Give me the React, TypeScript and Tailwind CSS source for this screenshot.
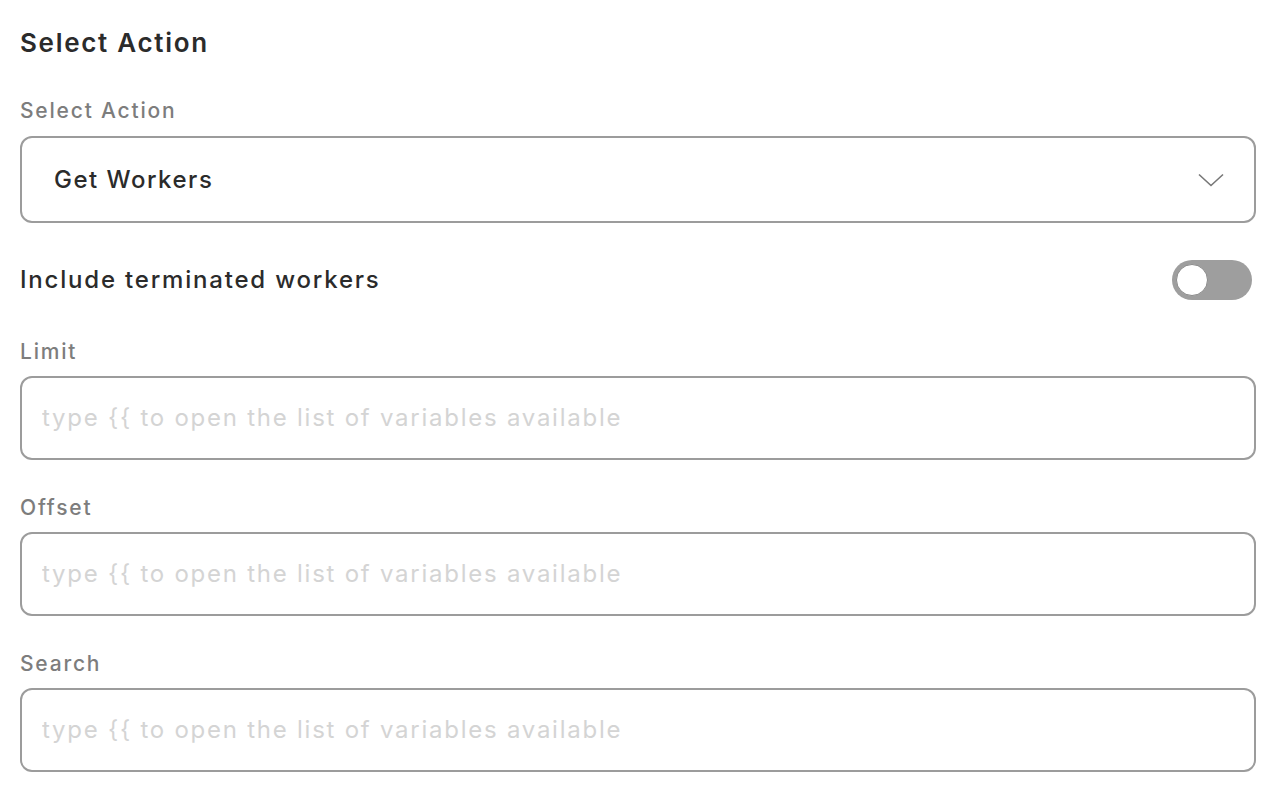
import React, { useState } from "react";

const FONT = { fontFamily: "Inter, 'Noto Sans', sans-serif" };

const PLACEHOLDER = "type {{ to open the list of variables available";

const Field = ({ label }: { label: string }) => (
  <div className="flex flex-col">
    <label className="text-[21px] font-medium leading-[32px] tracking-[1.8px] text-[#7d7d7d]">{label}</label>
    <div className="mt-[8px] flex h-[84px] items-center rounded-[12px] border-2 border-[#9c9c9c] px-[20px]">
      <input
        className="w-full bg-transparent text-[24px] tracking-[1.75px] text-[#333] outline-none placeholder:text-[#d4d4d4]"
        placeholder={PLACEHOLDER}
      />
    </div>
  </div>
);

const App = () => {
  // STATE
  const [includeTerminated, setIncludeTerminated] = useState(false);

  return (
    <div className="min-h-screen bg-white pl-[20px] pr-[32px] pt-[26px]" style={FONT}>
      <h2 className="text-[26px] font-semibold leading-[34px] tracking-[1.7px] text-[#2b2b2b]">Select Action</h2>

      <div className="mt-[35px] flex flex-col">
        <label className="text-[21px] font-medium leading-[32px] tracking-[1.8px] text-[#7d7d7d]">Select Action</label>
        <div className="mt-[9px] flex h-[87px] items-center justify-between rounded-[12px] border-2 border-[#9c9c9c] pl-[32px] pr-[30px]">
          <span className="text-[24px] font-medium tracking-[1.5px] text-[#2b2b2b]">Get Workers</span>
          <svg width="26" height="14" viewBox="0 0 26 14" fill="none">
            <path d="M1 1.5L13 12.5L25 1.5" stroke="#777" strokeWidth="1.6" />
          </svg>
        </div>
      </div>

      <div className="mt-[37px] flex items-center justify-between">
        <span className="text-[24px] font-medium tracking-[1.8px] text-[#2b2b2b]">Include terminated workers</span>
        <button
          className={`mr-[4px] flex h-[40px] w-[80px] items-center rounded-full px-[4px] ${
            includeTerminated ? "justify-end bg-[#555]" : "justify-start bg-[#9e9e9e]"
          }`}
          onClick={() => setIncludeTerminated((prev) => !prev)}
        >
          <span className="h-[32px] w-[32px] rounded-full border border-[#8a8a8a] bg-white" />
        </button>
      </div>

      <div className="mt-[36px] flex flex-col gap-[32px]">
        <Field label="Limit" />
        <Field label="Offset" />
        <Field label="Search" />
      </div>
    </div>
  );
};

export default App;
